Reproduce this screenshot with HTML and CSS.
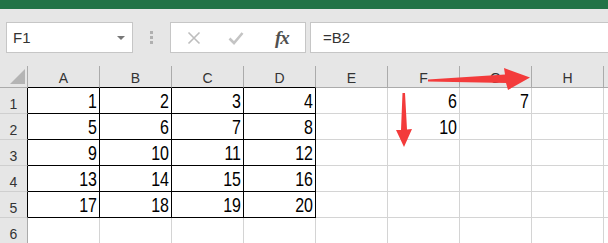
FILE: index.html
```html
<!DOCTYPE html>
<html>
<head>
<meta charset="utf-8">
<title>Sheet</title>
<link rel="stylesheet" href="styles.css">
</head>
<body>
<div class="titlebar"></div>

<div class="formulabar">
  <div class="namebox"><span>F1</span><span class="caret"></span></div>
  <div class="grip"><i></i><i></i><i></i></div>
  <div class="fxbox">
    <svg class="tool" width="14" height="14" viewBox="0 0 14 14"><path d="M1.5 1.5 L12.5 12.5 M12.5 1.5 L1.5 12.5" stroke="#bdbdbd" stroke-width="1.6" fill="none"/></svg>
    <svg class="tool" width="16" height="14" viewBox="0 0 16 14"><path d="M1.5 7.5 L6 12 L14.5 2" stroke="#c4c4c4" stroke-width="2.6" fill="none"/></svg>
    <span class="fx">fx</span>
  </div>
  <div class="formula">=B2</div>
</div>

<div class="sheet">
  <div class="corner"><svg width="28" height="21"><polygon points="10,18 25,18 25,3" fill="#b4b4b4"/></svg></div>
  <div class="hd top">A</div><div class="hd top">B</div><div class="hd top">C</div><div class="hd top">D</div>
  <div class="hd">E</div><div class="hd">F</div><div class="hd">G</div><div class="hd">H</div><div class="hd"></div>

  <div class="rh edge">1</div>
  <div class="c b"><span>1</span></div><div class="c b"><span>2</span></div><div class="c b"><span>3</span></div><div class="c b"><span>4</span></div>
  <div class="c"></div><div class="c"><span>6</span></div><div class="c"><span>7</span></div><div class="c"></div><div class="c"></div>

  <div class="rh edge">2</div>
  <div class="c b"><span>5</span></div><div class="c b"><span>6</span></div><div class="c b"><span>7</span></div><div class="c b"><span>8</span></div>
  <div class="c"></div><div class="c"><span>10</span></div><div class="c"></div><div class="c"></div><div class="c"></div>

  <div class="rh edge">3</div>
  <div class="c b"><span>9</span></div><div class="c b"><span>10</span></div><div class="c b"><span>11</span></div><div class="c b"><span>12</span></div>
  <div class="c"></div><div class="c"></div><div class="c"></div><div class="c"></div><div class="c"></div>

  <div class="rh edge">4</div>
  <div class="c b"><span>13</span></div><div class="c b"><span>14</span></div><div class="c b"><span>15</span></div><div class="c b"><span>16</span></div>
  <div class="c"></div><div class="c"></div><div class="c"></div><div class="c"></div><div class="c"></div>

  <div class="rh edge">5</div>
  <div class="c b"><span>17</span></div><div class="c b"><span>18</span></div><div class="c b"><span>19</span></div><div class="c b"><span>20</span></div>
  <div class="c"></div><div class="c"></div><div class="c"></div><div class="c"></div><div class="c"></div>

  <div class="rh">6</div>
  <div class="c"></div><div class="c"></div><div class="c"></div><div class="c"></div>
  <div class="c"></div><div class="c"></div><div class="c"></div><div class="c"></div><div class="c"></div>
</div>

<!-- red arrows drawn over the sheet -->
<svg class="arrows" width="608" height="243">
  <polygon points="428,79.5 505,74.5 504,68 530,77.5 508,90 506,83 428,81.5" fill="#f33b3b"/>
  <polygon points="402.5,93 405,93 407,129.5 412,129 404,147 396,130 401,130" fill="#f33b3b"/>
</svg>
</body>
</html>
```

FILE: styles.css
```css
body {
  margin:0;
  background:#e6e6e6;
  font-family:"Liberation Sans", Arial, sans-serif;
  overflow:hidden;
  width:608px;
  height:243px;
  position:relative;
}
.titlebar {
  height:9px;
  background:#217346;
}
.formulabar {
  display:flex;
  align-items:center;
  padding:13px 0 0 6px;
  height:31px;
  margin-bottom:13px;
}
.namebox, .fxbox, .formula {
  box-sizing:border-box;
  height:31px;
  background:#fff;
  border:1px solid #c6c6c6;
  display:flex;
  align-items:center;
}
.namebox {
  width:127px;
  padding:0 0 0 6px;
  font-size:15px;
  color:#333;
  justify-content:space-between;
}
.caret {
  width:0;
  height:0;
  border-left:4px solid transparent;
  border-right:4px solid transparent;
  border-top:4px solid #777;
  margin-right:7px;
}
.grip {
  display:flex;
  flex-direction:column;
  gap:2px;
  margin:0 17px 0 17px;
}
.grip i {
  display:block;
  width:3px;
  height:3px;
  background:#b0b0b0;
}
.fxbox {
  width:136px;
  padding-left:16px;
}
.tool { margin-right:29px; }
.fxbox .tool + .tool { margin-right:31px; margin-left:-2px; }
.fx {
  font-family:"Liberation Serif", serif;
  font-style:italic;
  font-weight:bold;
  font-size:19px;
  color:#505050;
  letter-spacing:-1px;
}
.formula {
  flex:1;
  margin-left:4px;
  margin-right:-4px;
  padding-left:12px;
  font-size:15px;
  color:#333;
}
.sheet {
  display:grid;
  grid-template-columns:28px repeat(9, 72px);
  grid-template-rows:22px repeat(6, 26px);
}
.sheet > div { box-sizing:border-box; }
.corner {
  border-right:1px solid #ababab;
  border-bottom:1px solid #ababab;
}
.corner svg { display:block; }
.hd {
  border-right:1px solid #ababab;
  border-bottom:1px solid #ababab;
  font-size:14px;
  color:#333;
  text-align:center;
  line-height:21px;
  padding-top:2px;
}
.hd.top { border-bottom-color:#000; }
.rh {
  border-right:1px solid #ababab;
  border-bottom:1px solid #cfcfcf;
  font-size:14px;
  color:#333;
  display:flex;
  align-items:flex-end;
  justify-content:center;
  line-height:14px;
  padding-bottom:2px;
}
.rh.edge { border-right-color:#000; }
.c {
  background:#fff;
  border-right:1px solid #d4d4d4;
  border-bottom:1px solid #d4d4d4;
  display:flex;
  align-items:flex-end;
  justify-content:flex-end;
  padding:0 2px 1px 0;
  font-size:16px;
  color:#000;
}
.c.b {
  border-right-color:#000;
  border-bottom-color:#000;
}
.c span {
  display:inline-block;
  line-height:16px;
  transform:scaleY(1.3);
  transform-origin:right bottom;
}
.arrows {
  position:absolute;
  left:0;
  top:0;
  pointer-events:none;
}
```
